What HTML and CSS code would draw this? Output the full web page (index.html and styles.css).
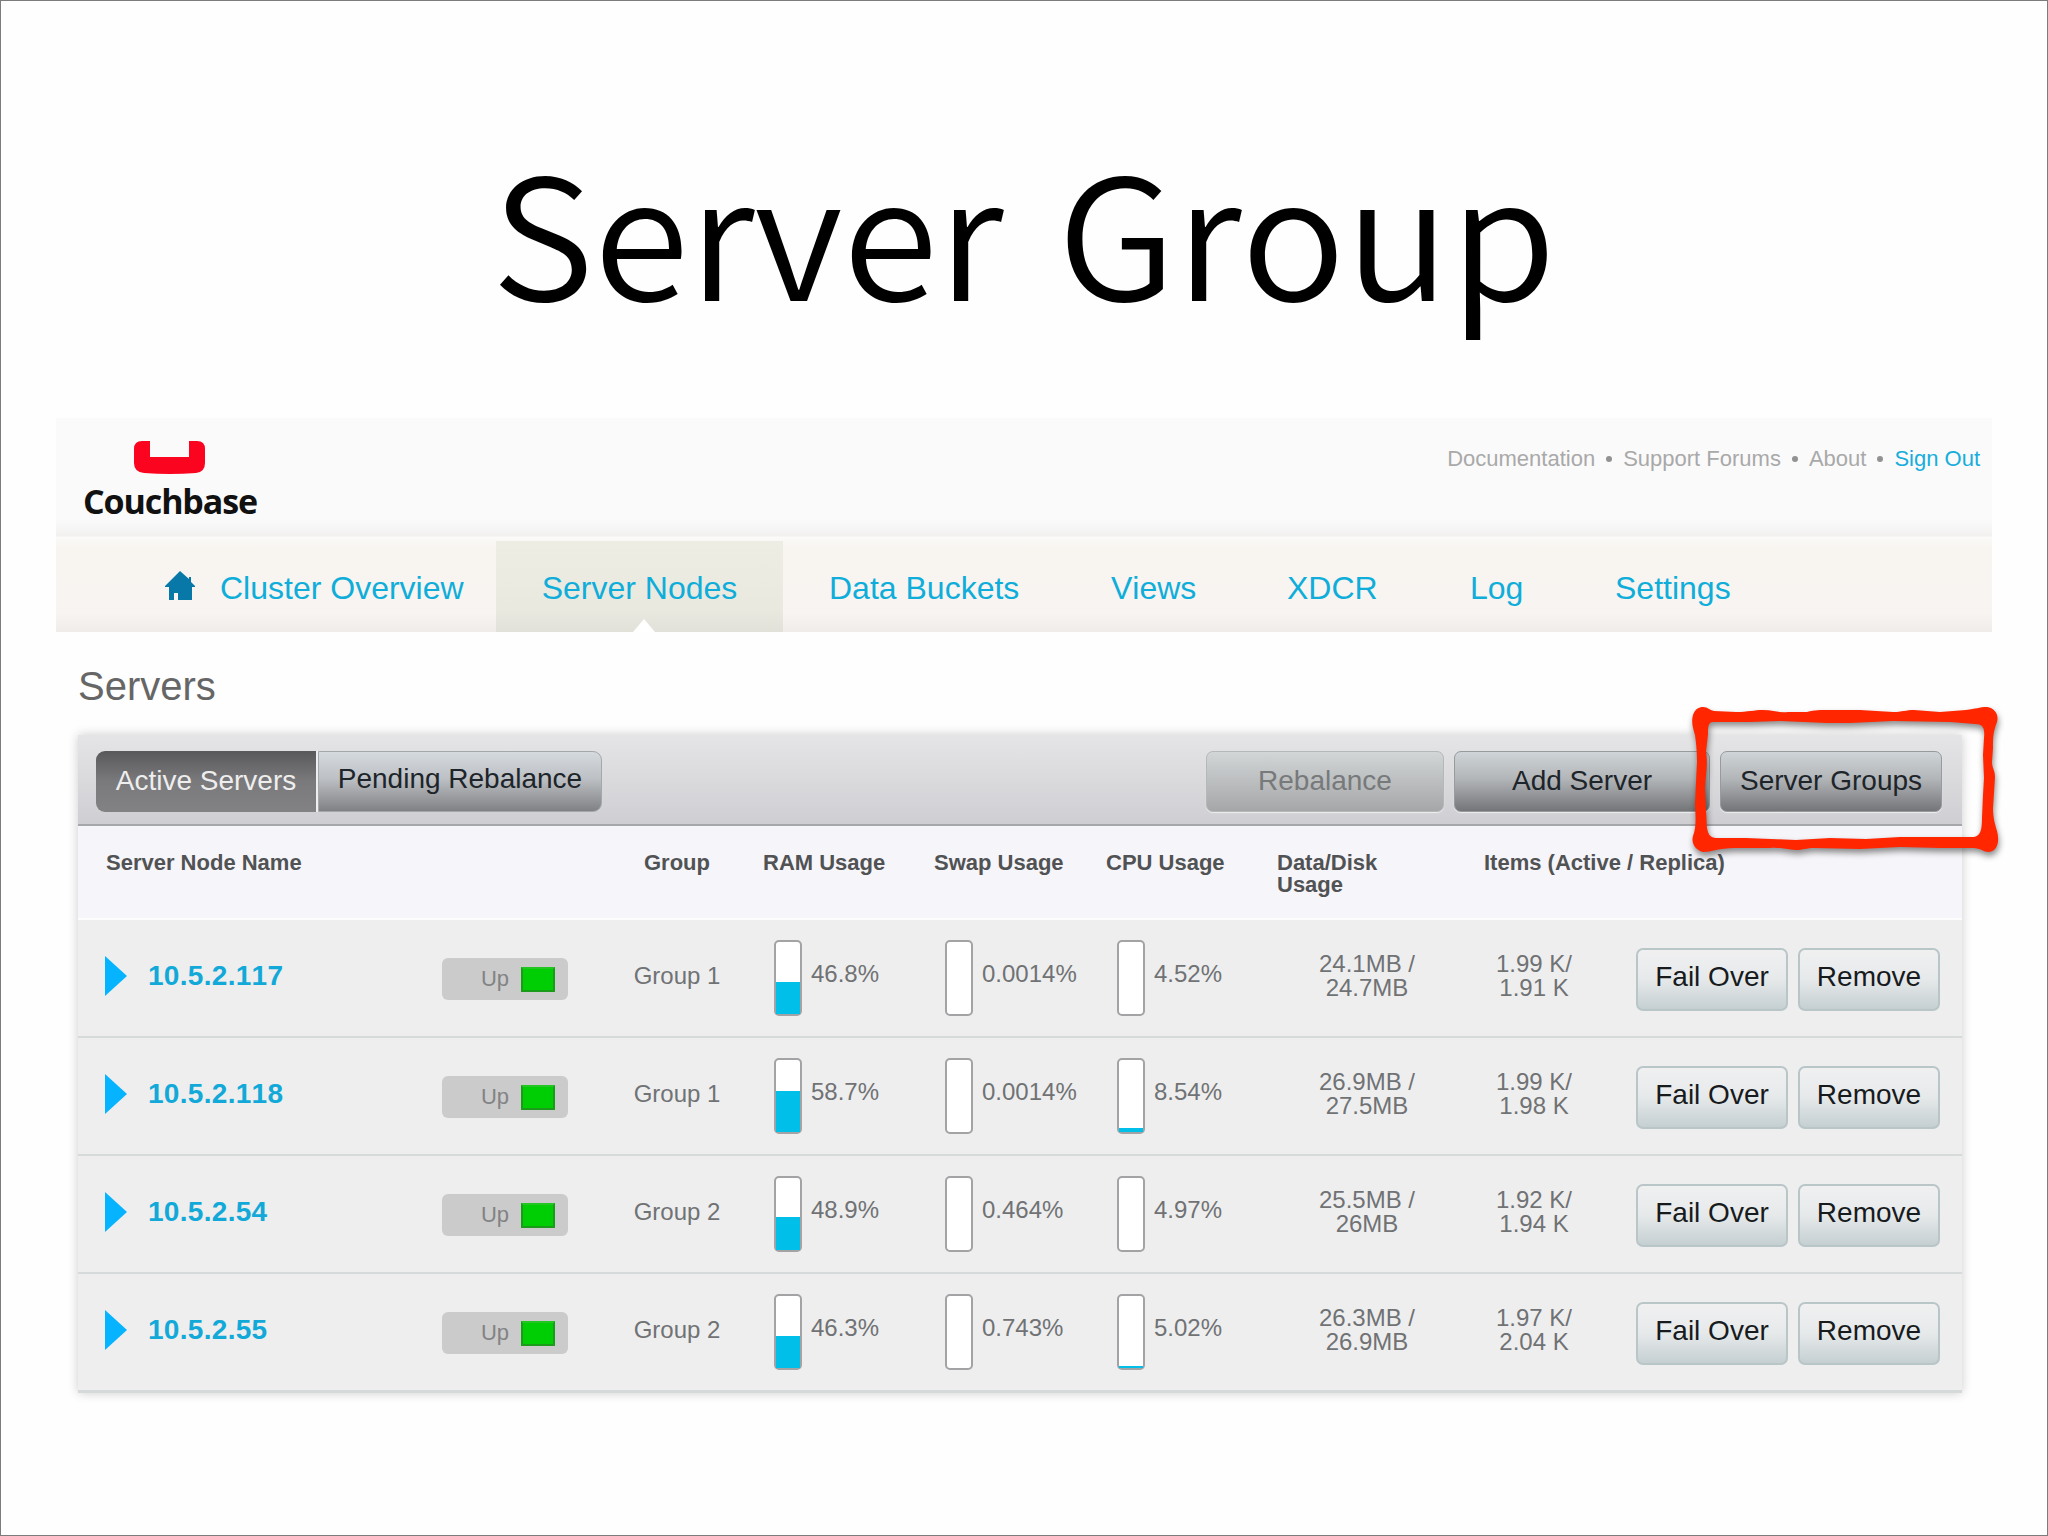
FILE: index.html
```html
<!DOCTYPE html>
<html lang="en">
<head>
  <meta charset="UTF-8">
  <title>Server Group</title>
  <link rel="stylesheet" href="styles.css">
</head>
<body>
<div class="slide">
  <h1><span>Server Group</span></h1>

  <div class="console">
    <!-- Header -->
    <div class="header">
      <div class="logo">
        <svg width="72" height="34" viewBox="0 0 72 34">
          <path fill="#fb0420" d="M8 0H16V16H55V0H63Q71 0 71 8V22Q71 31 62 32Q36 34 10 32Q0 31 0 22V8Q0 0 8 0Z"/>
        </svg>
        <span>Couchbase</span>
      </div>
      <div class="links">
        <a>Documentation</a><i></i><a>Support Forums</a><i></i><a>About</a><i></i><a class="signout">Sign Out</a>
      </div>
    </div>

    <!-- Navigation -->
    <div class="nav">
      <a class="overview">
        <svg width="30" height="30" viewBox="0 0 30 30">
          <path fill="#0878a8" d="M15 0L24 8V6H26V11L30 15V16H27V29H13V22H9V29H4V16H0V15Z"/>
        </svg>
        Cluster Overview
      </a>
      <a class="active">Server Nodes</a>
      <a class="buckets">Data Buckets</a>
      <a class="views">Views</a>
      <a class="xdcr">XDCR</a>
      <a class="log">Log</a>
      <a>Settings</a>
    </div>

    <h2>Servers</h2>

    <div class="panel">
      <div class="toolbar">
        <div class="tabs">
          <div class="tab selected">Active Servers</div>
          <div class="tab">Pending Rebalance</div>
        </div>
        <div class="tools">
          <div class="tool rebalance">Rebalance</div>
          <div class="tool add">Add Server</div>
          <div class="tool groups">Server Groups</div>
        </div>
        <svg class="marker" width="320" height="164" viewBox="1686 700 320 164">
          <path fill="#ff2600" fill-rule="evenodd" d="M1703 707
            C1708 707 1709 710 1714 711L1736 712C1748 712 1754 710 1763 710C1772 710 1778 713 1788 712L1807 712C1815 710 1820 710 1828 710L1860 710L1893 712C1902 712 1906 710 1914 710L1940 712L1966 710
            C1976 709 1979 707 1987 707C1995 708 1999 715 1997 722C1993 732 1993 738 1993 748L1992 762C1992 768 1995 770 1995 777L1993 808
            C1993 818 1995 824 1997 831C2000 842 1997 851 1989 852C1983 852 1981 848 1973 848L1940 848L1900 847L1860 849L1815 848C1806 848 1803 850 1796 850C1788 850 1780 847 1770 848L1735 848
            C1718 848 1712 852 1703 852C1695 850 1691 843 1693 836C1696 828 1696 820 1695 805L1696 782L1697 762C1697 750 1696 742 1695 735C1693 728 1691 722 1693 715C1695 709 1699 707 1703 707Z
            M1713 722C1708 722 1708 728 1708 734L1706 752C1708 764 1706 772 1705 788L1706 812C1707 820 1706 826 1708 832C1710 838 1714 838 1720 838L1746 838L1796 840L1830 838L1866 839L1900 837L1940 837L1974 837
            C1981 836 1982 828 1982 818L1983 795L1984 778L1983 755L1984 738C1985 728 1983 724 1975 724L1950 722L1893 721L1850 723L1827 723L1780 721L1750 722Z"/>
        </svg>
      </div>

      <div class="row head">
        <div>Server Node Name</div>
        <div></div>
        <div class="group">Group</div>
        <div>RAM Usage</div>
        <div>Swap Usage</div>
        <div>CPU Usage</div>
        <div>Data/Disk<br>Usage</div>
        <div class="items">Items (Active / Replica)</div>
      </div>

      <div class="row">
        <div class="name">10.5.2.117</div>
        <div class="status">Up<b></b></div>
        <div class="group">Group 1</div>
        <div class="usage"><span class="gauge"><i style="height: 45%"></i></span><span class="value">46.8%</span></div>
        <div class="usage"><span class="gauge"></span><span class="value">0.0014%</span></div>
        <div class="usage"><span class="gauge"></span><span class="value">4.52%</span></div>
        <div class="size">24.1MB /<br>24.7MB</div>
        <div class="count">1.99 K/<br>1.91 K</div>
        <div class="actions"><div class="btn failover">Fail Over</div><div class="btn">Remove</div></div>
      </div>

      <div class="row">
        <div class="name">10.5.2.118</div>
        <div class="status">Up<b></b></div>
        <div class="group">Group 1</div>
        <div class="usage"><span class="gauge"><i style="height: 57%"></i></span><span class="value">58.7%</span></div>
        <div class="usage"><span class="gauge"></span><span class="value">0.0014%</span></div>
        <div class="usage"><span class="gauge"><i style="height: 6%"></i></span><span class="value">8.54%</span></div>
        <div class="size">26.9MB /<br>27.5MB</div>
        <div class="count">1.99 K/<br>1.98 K</div>
        <div class="actions"><div class="btn failover">Fail Over</div><div class="btn">Remove</div></div>
      </div>

      <div class="row">
        <div class="name">10.5.2.54</div>
        <div class="status">Up<b></b></div>
        <div class="group">Group 2</div>
        <div class="usage"><span class="gauge"><i style="height: 46%"></i></span><span class="value">48.9%</span></div>
        <div class="usage"><span class="gauge"></span><span class="value">0.464%</span></div>
        <div class="usage"><span class="gauge"></span><span class="value">4.97%</span></div>
        <div class="size">25.5MB /<br>26MB</div>
        <div class="count">1.92 K/<br>1.94 K</div>
        <div class="actions"><div class="btn failover">Fail Over</div><div class="btn">Remove</div></div>
      </div>

      <div class="row">
        <div class="name">10.5.2.55</div>
        <div class="status">Up<b></b></div>
        <div class="group">Group 2</div>
        <div class="usage"><span class="gauge"><i style="height: 45%"></i></span><span class="value">46.3%</span></div>
        <div class="usage"><span class="gauge"></span><span class="value">0.743%</span></div>
        <div class="usage"><span class="gauge"><i style="height: 3%"></i></span><span class="value">5.02%</span></div>
        <div class="size">26.3MB /<br>26.9MB</div>
        <div class="count">1.97 K/<br>2.04 K</div>
        <div class="actions"><div class="btn failover">Fail Over</div><div class="btn">Remove</div></div>
      </div>
    </div>
  </div>
</div>
</body>
</html>
```
FILE: styles.css
```css
* {
  box-sizing: border-box;
}
body {
  margin: 0;
  background: #fefefe;
  font-family: "Liberation Sans", Arial, sans-serif;
  font-kerning: none;
  white-space: nowrap;
}
.slide {
  height: 1536px;
  border: 1px solid #7c7c7c;
  overflow: hidden;
}
h1 {
  margin: 0;
  height: 417px;
  padding-top: 107px;
  line-height: 240px;
  text-align: center;
  font-family: "Noto Sans CJK JP", sans-serif;
  font-size: 168px;
  font-weight: 350;
  color: #000;
}
h1 span {
  display: inline-block;
  word-spacing: 15px;
  transform: scaleX(1.03);
}
.console {
  width: 1936px;
  margin-left: 55px;
}

/* Header */
.header {
  display: flex;
  justify-content: space-between;
  height: 120px;
  padding: 23px 12px 0 27px;
  background: linear-gradient(#fafafa 0%, #fbfafb 85%, #f2f1f0 98%, #fdfdfc 100%);
}
.logo {
  display: flex;
  flex-direction: column;
  align-items: center;
  width: 174px;
}
.logo span {
  margin-top: 6px;
  line-height: 40px;
  font-family: "Open Sans", "Noto Sans", sans-serif;
  font-weight: bold;
  font-size: 34px;
  letter-spacing: -1.1px;
  color: #111;
}
.links {
  display: flex;
  height: 36px;
  align-items: center;
  font-size: 22px;
  color: #a9a9a9;
}
.links i {
  width: 6px;
  height: 6px;
  margin: 0 11px;
  border-radius: 50%;
  background: #929292;
}
.links .signout {
  color: #17aedb;
}

/* Navigation */
.nav {
  display: flex;
  height: 94px;
  padding-top: 3px;
  line-height: 95px;
  font-size: 32px;
  color: #0fadda;
  background: linear-gradient(#fbfaf8 0%, #f8f5f1 10%, #f7f4f1 80%, #efecea 100%);
}
.overview {
  display: flex;
  width: 440px;
  padding-left: 109px;
}
.overview svg {
  margin: 30px 25px 0 0;
}
.nav .active {
  position: relative;
  width: 287px;
  text-align: center;
  background: linear-gradient(#edede4 0%, #eae9e0 75%, #e2e1d9 100%);
}
.nav .active::after {
  content: "";
  position: absolute;
  left: 137px;
  bottom: 0;
  border: 11px solid transparent;
  border-top: 0;
  border-bottom: 13px solid #fff;
}
.buckets {
  width: 328px;
  padding-left: 46px;
}
.views {
  width: 176px;
}
.xdcr {
  width: 183px;
}
.log {
  width: 145px;
}
h2 {
  margin: 0;
  height: 103px;
  padding: 31px 0 0 22px;
  line-height: 46px;
  font-size: 40px;
  font-weight: normal;
  color: #666;
}

/* Servers panel */
.panel {
  width: 1884px;
  margin-left: 22px;
  border-bottom: 3px solid #d5d9da;
  box-shadow: 0 0 10px rgba(0, 0, 0, 0.2);
}
.toolbar {
  position: relative;
  display: flex;
  justify-content: space-between;
  height: 91px;
  padding: 16px 20px 0 18px;
  border-bottom: 2px solid #a6a7ab;
  background: linear-gradient(#e5e4e6, #cfced2);
  font-size: 28px;
  color: #1d252a;
}
.tabs, .tools {
  display: flex;
}
.tab {
  height: 61px;
  width: 284px;
  line-height: 54px;
  text-align: center;
  border: 1px solid #a4a8aa;
  border-radius: 0 9px 9px 0;
  background: linear-gradient(#d5dadf 0%, #bdc0c4 45%, #808184 100%);
}
.tab.selected {
  width: 222px;
  line-height: 59px;
  color: #eee;
  border: 0;
  border-right: 2px solid #eee;
  border-radius: 9px 0 0 9px;
  background: linear-gradient(#59585a, #7a797c 50%, #828184);
}
.tool {
  height: 61px;
  line-height: 57px;
  text-align: center;
  border: 1px solid #969b9e;
  border-radius: 7px;
  background: linear-gradient(#ced4d7 0%, #b3b6b9 45%, #747578 100%);
  box-shadow: 0 1px 1px #eee;
}
.rebalance {
  width: 238px;
  margin-right: 10px;
  color: #77797b;
  border-color: #b5b8b9;
  background: linear-gradient(#d2d6d7, #a5a6a8);
}
.add {
  width: 256px;
  margin-right: 10px;
}
.groups {
  width: 222px;
}
/* hand-drawn frame over the Server Groups button */
.marker {
  position: absolute;
  left: 1608px;
  top: -35px;
  filter: drop-shadow(1px 4px 3px rgba(0, 0, 0, 0.45));
}

.row {
  display: grid;
  grid-template-columns: 364px 158px 163px 171px 172px 171px 180px 154px 1fr;
  align-items: center;
  height: 118px;
  border-top: 2px solid #d6dadb;
  background: #eeeeef;
  font-size: 24px;
  color: #707274;
}
.row.head {
  height: 94px;
  align-items: start;
  padding-top: 26px;
  border: 0;
  border-bottom: 2px solid #fcfcfd;
  background: #f6f5f9;
  font-size: 22px;
  font-weight: bold;
  line-height: 22px;
  color: #505254;
}
.head + .row {
  height: 116px;
  border-top: 0;
}
.head > div:first-child {
  padding-left: 28px;
}
.head .items {
  padding-left: 27px;
}
.group {
  width: 154px;
  padding-bottom: 4px;
  text-align: center;
}
.name {
  display: flex;
  align-items: center;
  padding-bottom: 4px;
  font-size: 28px;
  font-weight: bold;
  letter-spacing: 0.3px;
  color: #12a9d8;
}
.name::before {
  content: "";
  margin: 0 21px 0 27px;
  border: 20px solid transparent;
  border-left: 22px solid #06b3fe;
  border-right: 0;
}
.status {
  display: flex;
  align-items: center;
  justify-content: flex-end;
  width: 126px;
  height: 42px;
  margin-top: 2px;
  padding-right: 13px;
  border-radius: 6px;
  background: #cbcbcc;
  font-size: 22px;
  color: #828384;
}
.status b {
  width: 34px;
  height: 25px;
  margin-left: 12px;
  border: 2px solid #1a9c1a;
  border-top-color: #22c522;
  background: #00ce05;
}
.usage {
  display: flex;
  align-items: center;
  gap: 9px;
  padding-left: 11px;
}
.value {
  padding-bottom: 8px;
}
.gauge {
  display: flex;
  align-items: flex-end;
  width: 28px;
  height: 76px;
  border: 2px solid #a3a3a5;
  border-radius: 5px;
  background: #fff;
}
.gauge i {
  width: 100%;
  background: #00bfe8;
}
.size, .count {
  padding-bottom: 5px;
  line-height: 24px;
  text-align: center;
}
.actions {
  display: flex;
  gap: 10px;
  padding: 2px 0 0 25px;
}
.btn {
  width: 142px;
  height: 63px;
  line-height: 53px;
  text-align: center;
  font-size: 28px;
  color: #171b1d;
  border: 2px solid #b8c6c8;
  border-radius: 7px;
  background: linear-gradient(#f0f0f1 0%, #e6e9ea 50%, #c5cfd2 100%);
}
.failover {
  width: 152px;
}
```
